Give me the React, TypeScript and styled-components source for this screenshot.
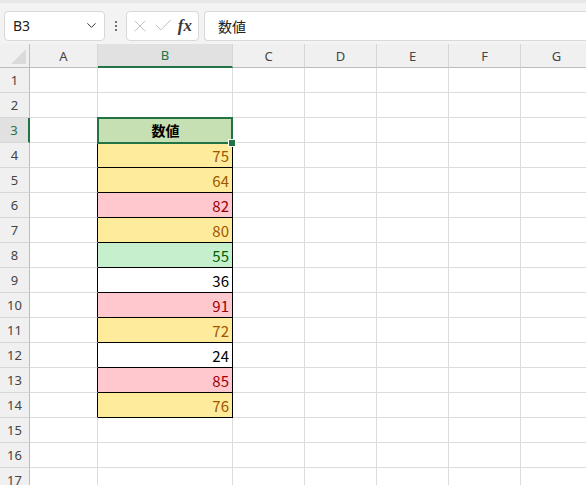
import styled, { createGlobalStyle } from 'styled-components';
import { ChevronDown, X, Check } from 'lucide-react';

const GREEN = '#217346';

type Tone = 'yellow' | 'red' | 'green' | 'plain';

const tones: Record<Tone, { bg: string; fg: string }> = {
    yellow: { bg: '#ffeb9c', fg: '#9c5700' },
    red: { bg: '#ffc7ce', fg: '#9c0006' },
    green: { bg: '#c6efce', fg: '#006100' },
    plain: { bg: '#ffffff', fg: '#000000' },
};

const values: { v: number; tone: Tone }[] = [
    { v: 75, tone: 'yellow' },
    { v: 64, tone: 'yellow' },
    { v: 82, tone: 'red' },
    { v: 80, tone: 'yellow' },
    { v: 55, tone: 'green' },
    { v: 36, tone: 'plain' },
    { v: 91, tone: 'red' },
    { v: 72, tone: 'yellow' },
    { v: 24, tone: 'plain' },
    { v: 85, tone: 'red' },
    { v: 76, tone: 'yellow' },
];

const columns = ['A', 'B', 'C', 'D', 'E', 'F', 'G'];
const ROWS = 18;

const GlobalStyle = createGlobalStyle`
    html, body {
        margin: 0;
        padding: 0;
        background: #ffffff;
        overflow: hidden;
    }
    body {
        font-family: "Noto Sans", "Noto Sans CJK JP", sans-serif;
    }
`;

const App = () => {
    const renderRow = (r: number) => {
        const dataIndex = r - 4;
        const item = dataIndex >= 0 && dataIndex < values.length ? values[dataIndex] : null;
        const boxed = r >= 4 && r <= 14;

        return [
            <RowHead key={ `h${ r }` } $active={ r === 3 }>{ r }</RowHead>,
            <Cell key={ `a${ r }` } $edge={ boxed } />,
            r === 3
                ? <TitleCell key={ `b${ r }` }>数値</TitleCell>
                : <ValueCell key={ `b${ r }` }
                             $tone={ item ? item.tone : 'plain' }
                             $boxed={ boxed }>
                    { item ? item.v : '' }
                </ValueCell>,
            ...columns.slice(2).map((c) => <Cell key={ `${ c }${ r }` } />),
        ];
    };

    return (
        <>
            <GlobalStyle />
            <Page>
                <Toolbar>
                    <NameBox>
                        <span>B3</span>
                        <ChevronDown size={ 15 } strokeWidth={ 1.6 } color='#333' />
                    </NameBox>
                    <Dots>
                        <i /><i /><i />
                    </Dots>
                    <FormulaButtons>
                        <X size={ 20 } strokeWidth={ 1 } color='#b8b8b8' />
                        <Check size={ 21 } strokeWidth={ 1 } color='#b8b8b8' />
                        <Fx>fx</Fx>
                    </FormulaButtons>
                    <FormulaInput>数値</FormulaInput>
                </Toolbar>

                <SheetWrapper>
                    <Sheet>
                        <Corner><CornerTriangle /></Corner>
                        { columns.map((c) => (
                            <ColHead key={ c } $active={ c === 'B' }>{ c }</ColHead>
                        )) }
                        { Array.from({ length: ROWS }, (_, i) => renderRow(i + 1)) }
                    </Sheet>
                    <Selection>
                        <FillHandle />
                    </Selection>
                </SheetWrapper>
            </Page>
        </>
    );
};

const Page = styled.div`
    width: 586px;
    height: 485px;
    overflow: hidden;
    background: #ffffff;
`;

const Toolbar = styled.div`
    display: flex;
    align-items: center;
    height: 44px;
    box-sizing: border-box;
    padding: 4px 0 0 4px;
    background: #f3f3f3;
    border-top: 3px solid #e7e7e7;
`;

const Box = styled.div`
    height: 30px;
    box-sizing: border-box;
    background: #ffffff;
    border: 1px solid #d8d8d8;
    border-radius: 4px;
    display: flex;
    align-items: center;
`;

const NameBox = styled(Box)`
    width: 101px;
    padding: 0 5px 0 8px;
    justify-content: space-between;
    font-size: 14px;
    color: #222;
`;

const Dots = styled.div`
    width: 21px;
    display: flex;
    flex-direction: column;
    align-items: center;
    gap: 2px;

    i {
        display: block;
        width: 2px;
        height: 2px;
        background: #444;
        border-radius: 1px;
    }
`;

const FormulaButtons = styled(Box)`
    width: 73px;
    padding: 0 4px 0 3px;
    justify-content: space-between;
`;

const Fx = styled.span`
    font-family: "Liberation Serif", "DejaVu Serif", serif;
    font-style: italic;
    font-weight: bold;
    font-size: 17px;
    color: #3a3a3a;
    padding-right: 2px;
`;

const FormulaInput = styled(Box)`
    flex: 1;
    margin-left: 5px;
    padding-left: 13px;
    border-right: none;
    border-radius: 4px 0 0 4px;
    font-size: 14px;
    color: #222;
`;

const SheetWrapper = styled.div`
    position: relative;
`;

const Sheet = styled.div`
    display: grid;
    grid-template-columns: 30px 68px 135px 72px 72px 72px 72px 72px;
    grid-template-rows: 24px;
    grid-auto-rows: 25px;
    font-size: 13px;
`;

const HeadBase = styled.div`
    box-sizing: border-box;
    background: #f0f0f0;
    color: #444;
    display: flex;
    align-items: center;
    justify-content: center;
`;

const Corner = styled(HeadBase)`
    position: relative;
    border-right: 1px solid #bdbdbd;
    border-bottom: 1px solid #bdbdbd;
`;

const CornerTriangle = styled.div`
    position: absolute;
    right: 3px;
    bottom: 3px;
    width: 0;
    height: 0;
    border-left: 15px solid transparent;
    border-bottom: 15px solid #dadada;
`;

const ColHead = styled(HeadBase)<{ $active?: boolean }>`
    border-right: 1px solid #d6d6d6;
    border-bottom: ${ (p) => p.$active ? `2px solid ${ GREEN }` : '1px solid #bdbdbd' };
    background: ${ (p) => p.$active ? '#e1e1e1' : '#f0f0f0' };
    color: ${ (p) => p.$active ? GREEN : '#444' };
`;

const RowHead = styled(HeadBase)<{ $active?: boolean }>`
    border-bottom: 1px solid #d6d6d6;
    border-right: ${ (p) => p.$active ? `2px solid ${ GREEN }` : '1px solid #bdbdbd' };
    background: ${ (p) => p.$active ? '#e1e1e1' : '#f0f0f0' };
    color: ${ (p) => p.$active ? GREEN : '#444' };
`;

const Cell = styled.div<{ $edge?: boolean }>`
    box-sizing: border-box;
    border-right: 1px solid ${ (p) => p.$edge ? '#000' : '#dcdcdc' };
    border-bottom: 1px solid #dcdcdc;
`;

const ValueCell = styled.div<{ $tone: Tone; $boxed?: boolean }>`
    box-sizing: border-box;
    display: flex;
    align-items: center;
    justify-content: flex-end;
    padding: 1px 3px 0 0;
    font-family: "Noto Sans CJK JP", sans-serif;
    font-size: 15px;
    background: ${ (p) => tones[p.$tone].bg };
    color: ${ (p) => tones[p.$tone].fg };
    border-right: 1px solid ${ (p) => p.$boxed ? '#000' : '#dcdcdc' };
    border-bottom: 1px solid ${ (p) => p.$boxed ? '#000' : '#dcdcdc' };
`;

const TitleCell = styled.div`
    box-sizing: border-box;
    display: flex;
    align-items: center;
    justify-content: center;
    background: #c6e0b4;
    font-family: "Noto Sans CJK JP", sans-serif;
    font-weight: bold;
    font-size: 14px;
    color: #000;
    border-bottom: 1px solid #000;
`;

const Selection = styled.div`
    position: absolute;
    left: 97px;
    top: 73px;
    width: 136px;
    height: 27px;
    box-sizing: border-box;
    border: 2px solid ${ GREEN };
    pointer-events: none;
`;

const FillHandle = styled.div`
    position: absolute;
    right: -5px;
    bottom: -5px;
    width: 6px;
    height: 6px;
    background: ${ GREEN };
    border: 1px solid #ffffff;
`;

export default App;
